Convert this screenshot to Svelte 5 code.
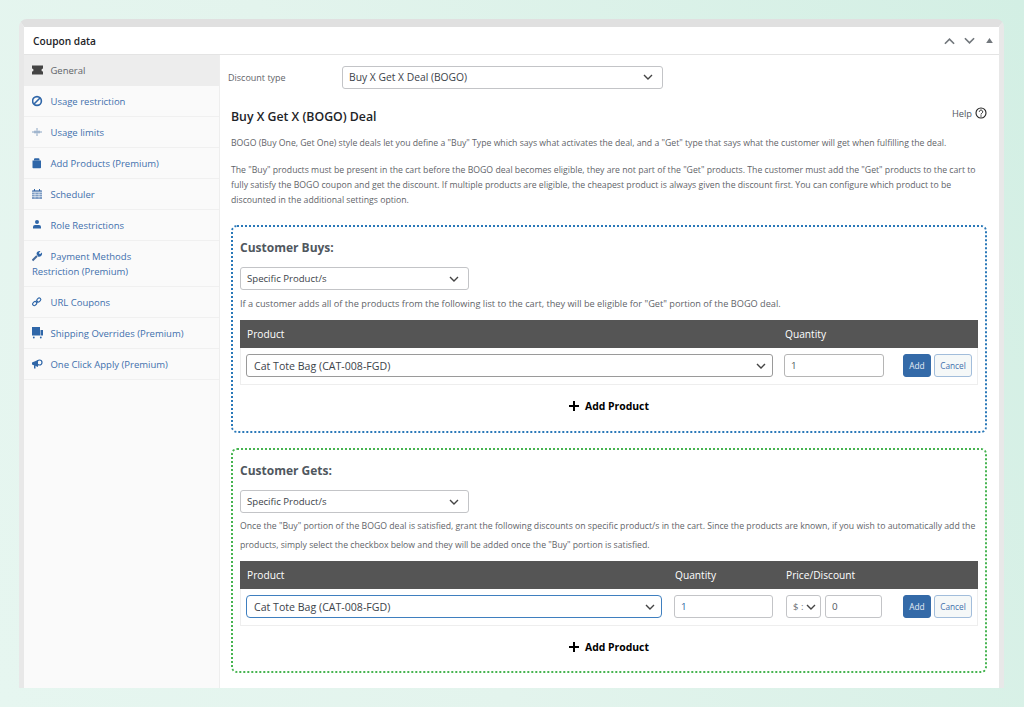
<script>
  const nav = [
    { label: 'General', icon: 'ticket', active: true },
    { label: 'Usage restriction', icon: 'ban' },
    { label: 'Usage limits', icon: 'limits' },
    { label: 'Add Products (Premium)', icon: 'bag' },
    { label: 'Scheduler', icon: 'calendar' },
    { label: 'Role Restrictions', icon: 'user' },
    { label: 'Payment Methods Restriction (Premium)', icon: 'wrench', tall: true },
    { label: 'URL Coupons', icon: 'link' },
    { label: 'Shipping Overrides (Premium)', icon: 'truck' },
    { label: 'One Click Apply (Premium)', icon: 'mega' }
  ];
</script>

{#snippet chevron()}
  <svg class="chev" viewBox="0 0 10 6" width="10" height="6"><path d="M1 1l4 4 4-4" fill="none" stroke="#444" stroke-width="1.4"/></svg>
{/snippet}

{#snippet select(text, cls)}
  <div class="select {cls}"><span>{text}</span>{@render chevron()}</div>
{/snippet}

{#snippet addProduct()}
  <div class="add-product"><svg viewBox="0 0 10 10" width="10" height="10"><path d="M5 0v10M0 5h10" stroke="#000" stroke-width="2"/></svg><b>Add Product</b></div>
{/snippet}

{#snippet buttons()}
  <div class="buttons"><span class="btn primary">Add</span><span class="btn secondary">Cancel</span></div>
{/snippet}

<div class="window">
  <header class="topbar">
    <h2>Coupon data</h2>
    <div class="controls">
      <svg viewBox="0 0 12 8" width="11" height="8"><path d="M1 7l5-5 5 5" fill="none" stroke="#72777c" stroke-width="1.8"/></svg>
      <svg viewBox="0 0 12 8" width="11" height="8"><path d="M1 1l5 5 5-5" fill="none" stroke="#72777c" stroke-width="1.8"/></svg>
      <svg class="tri" viewBox="0 0 8 6" width="7" height="5"><path d="M4 0l4 6H0z" fill="#72777c"/></svg>
    </div>
  </header>
  <div class="body">
    <aside class="side">
      <ul>
        {#each nav as item}
          <li class:active={item.active} class:tall={item.tall}>
            <svg class="ico" viewBox="0 0 12 12" width="12" height="12">
              {#if item.icon === 'ticket'}
                <path d="M0 1.500h11v3a1.500 1.500 0 0 0 0 3v3H0v-3a1.500 1.500 0 0 0 0-3z" fill="#444"/>
              {:else if item.icon === 'ban'}
                <circle cx="5" cy="6" r="4.400" fill="none" stroke="#2f66a8" stroke-width="1.600"/><path d="M2 9l6-6" stroke="#2f66a8" stroke-width="1.600"/>
              {:else if item.icon === 'limits'}
                <path d="M0 6h10M5 2v8M3 4.500v3M7 4.500v3" stroke="#6f8fb5" stroke-width=".8" fill="none"/>
              {:else if item.icon === 'bag'}
                <path d="M.5 3.500h8.500V10.500a.7.7 0 0 1-.7.7H1.200a.7.7 0 0 1-.7-.7z" fill="#2f66a8"/><path d="M2 3.500V2.300a1 1 0 0 1 1-1h3.500a1 1 0 0 1 1 1v1.200" fill="#2f66a8"/>
              {:else if item.icon === 'calendar'}
                <path d="M1 2h8a1 1 0 0 1 1 1v8H0V3a1 1 0 0 1 1-1z" fill="#7f9dc4"/><path d="M2.500 1v2M7.500 1v2" stroke="#2f66a8"/><path d="M0 4.500h10M0 6.500h10M0 8.500h10M3 4.500v6M7 4.500v6" stroke="#fff" stroke-width=".5"/>
              {:else if item.icon === 'user'}
                <circle cx="5" cy="3" r="2" fill="#2f66a8"/><path d="M1 9.500V8a2 2 0 0 1 2-2h4a2 2 0 0 1 2 2v1.500z" fill="#2f66a8"/>
              {:else if item.icon === 'wrench'}
                <path d="M.5 10.500l4.500-4.500" stroke="#44699a" stroke-width="2"/><path d="M4.500 4a3 3 0 0 1 4-2.800L6.800 3 8 4.200l1.800-1.700A3 3 0 0 1 6 6.500z" fill="#2f66a8"/>
              {:else if item.icon === 'link'}
                <path d="M4 7l2-2" stroke="#2f66a8" stroke-width="1.200"/><rect x=".5" y="6" width="4.500" height="3.200" rx="1.600" transform="rotate(-45 2.700 7.600)" fill="none" stroke="#2f66a8" stroke-width="1.100"/><rect x="4.500" y="2.400" width="4.500" height="3.200" rx="1.600" transform="rotate(-45 6.700 4)" fill="none" stroke="#2f66a8" stroke-width="1.100"/>
              {:else if item.icon === 'truck'}
                <path d="M0 0h8v8.500H0z" fill="#2f66a8"/><path d="M8.500 3H11v5.500H8.500z" fill="#2f66a8"/><circle cx="1.800" cy="10.500" r=".9" fill="#2f66a8"/><circle cx="8.800" cy="10.500" r=".9" fill="#2f66a8"/>
              {:else}
                <path d="M0 4.500L6 2v7L0 6.500z" fill="#2f66a8"/><circle cx="7.500" cy="4.500" r="2.500" fill="none" stroke="#2f66a8" stroke-width="1.200"/><path d="M2 7v3.500h1.500V7.500" fill="#2f66a8"/>
              {/if}
            </svg>
            {item.label}
          </li>
        {/each}
      </ul>
    </aside>
    <main class="content">
      <div class="type-row">
        <span class="type-label">Discount type</span>
        {@render select('Buy X Get X Deal (BOGO)', 'type-select')}
      </div>
      <div class="title-row">
        <h3>Buy X Get X (BOGO) Deal</h3>
        <span class="help">Help
          <svg viewBox="0 0 12 12" width="12" height="12"><circle cx="6" cy="6" r="5" fill="none" stroke="#222" stroke-width="1.100"/><path d="M4.300 4.700a1.700 1.700 0 1 1 2.600 1.500c-.6.4-.9.700-.9 1.300" fill="none" stroke="#222"/><circle cx="6" cy="9" r=".7" fill="#222"/></svg>
        </span>
      </div>
      <p class="intro">BOGO (Buy One, Get One) style deals let you define a "Buy" Type which says what activates the deal, and a "Get" type that says what the customer will get when fulfilling the deal.</p>
      <p class="intro second">The "Buy" products must be present in the cart before the BOGO deal becomes eligible, they are not part of the "Get" products. The customer must add the "Get" products to the cart to fully satisfy the BOGO coupon and get the discount. If multiple products are eligible, the cheapest product is always given the discount first. You can configure which product to be discounted in the additional settings option.</p>

      <section class="box buys">
        <h4>Customer Buys:</h4>
        {@render select('Specific Product/s', 'scope')}
        <p class="note">If a customer adds all of the products from the following list to the cart, they will be eligible for "Get" portion of the BOGO deal.</p>
        <div class="table">
          <div class="thead buys-grid"><span>Product</span><span>Quantity</span></div>
          <div class="row buys-grid">
            {@render select('Cat Tote Bag (CAT-008-FGD)', 'product')}
            <div class="input dark">1</div>
            {@render buttons()}
          </div>
        </div>
        {@render addProduct()}
      </section>

      <section class="box gets">
        <h4>Customer Gets:</h4>
        {@render select('Specific Product/s', 'scope')}
        <p class="note two">Once the "Buy" portion of the BOGO deal is satisfied, grant the following discounts on specific product/s in the cart. Since the products are known, if you wish to automatically add the products, simply select the checkbox below and they will be added once the "Buy" portion is satisfied.</p>
        <div class="table">
          <div class="thead gets-grid"><span>Product</span><span>Quantity</span><span>Price/Discount</span></div>
          <div class="row gets-grid">
            {@render select('Cat Tote Bag (CAT-008-FGD)', 'product focus')}
            <div class="input">1</div>
            <div class="price">
              {@render select('$ :', 'currency')}
              <div class="input amount">0</div>
            </div>
            {@render buttons()}
          </div>
        </div>
        {@render addProduct()}
      </section>
    </main>
  </div>
</div>

<style>
  :global(body) {
    margin: 0;
    height: 707px;
    overflow: hidden;
    background: linear-gradient(70deg, #e6f6f0 0%, #e3f4ed 40%, #d3efe4 100%);
    font-family: "Open Sans", "Noto Sans", sans-serif;
    color: #50575e;
  }
  * { box-sizing: border-box; }
  .window {
    width: 985px;
    height: 669px;
    margin: 19px 0 0 19px;
    border: 5px solid #e8e8e8;
    border-top: 8px solid #e0e0e0;
    border-bottom: 0;
    border-radius: 8px 8px 0 0;
    background: #fff;
    display: flex;
    flex-direction: column;
  }
  .topbar {
    height: 28px;
    flex: none;
    display: flex;
    align-items: center;
    justify-content: space-between;
    padding: 0 6px 0 9px;
    border-bottom: 1px solid #e4e4e4;
  }
  h2 { margin: 0; font-size: 10.200px; font-weight: 600; color: #1d2327; }
  .controls { display: flex; align-items: center; gap: 9px; }
  .tri { margin-left: 2px; }
  .body { flex: 1; display: flex; min-height: 0; }
  .side { width: 196px; flex: none; background: #fafafa; border-right: 1px solid #eee; }
  ul { list-style: none; margin: 0; padding: 0; }
  li {
    height: 31px;
    padding: 7.500px 8px 0;
    font-size: 9.500px;
    line-height: 15px;
    color: #3f70ad;
    border-bottom: 1px solid #f0f0f0;
  }
  li.tall { height: 46px; padding-right: 60px; }
  li.active { background: #ededed; color: #5f6469; border-bottom-color: #ededed; }
  .ico { vertical-align: -2px; margin-right: 4px; }
  .content { flex: 1; padding: 10px 12px 0 11px; min-width: 0; }
  .type-row { display: flex; align-items: center; height: 24px; margin-left: -3px; }
  .type-label { width: 114px; font-size: 9px; color: #5f6469; }
  .select {
    display: flex;
    align-items: center;
    justify-content: space-between;
    height: 23px;
    padding: 0 9px 0 6px;
    border: 1px solid #c3c4c7;
    border-radius: 3px;
    background: #fff;
    font-size: 9.600px;
    color: #3c434a;
  }
  .type-select { width: 321px; font-size: 10.300px; }
  .title-row { display: flex; justify-content: space-between; align-items: center; margin-top: 17px; height: 20px; }
  h3 { margin: 0; font-size: 12.300px; font-weight: 600; color: #1d2327; }
  .help { display: flex; align-items: center; gap: 3px; font-size: 9.300px; color: #50575e; margin-bottom: 6px; }
  .intro { margin: 10px 0 0; font-size: 8.700px; line-height: 15px; color: #5f6469; }
  .intro.second { margin-top: 12px; }
  .box { border: 2px dotted #2a78b8; border-radius: 6px; padding: 12px 7px 0; margin-top: 17px; height: 208px; }
  .gets { border-color: #46b450; margin-top: 15px; height: 225px; }
  h4 { margin: 0 0 11px; font-size: 12px; line-height: 17px; font-weight: 700; color: #50575e; }
  .scope { width: 229px; }
  .note { margin: 7px 0 10px; font-size: 9.200px; line-height: 13px; color: #5f6469; }
  .note.two { font-size: 8.700px; line-height: 19px; margin: 4px 0 6px; }
  .table { border: 1px solid #eee; border-top: 0; width: 738px; }
  .thead { height: 28px; background: #555; color: #fff; font-size: 10.200px; align-items: center; margin: 0 0 0 -1px; width: 738px; }
  .thead.buys-grid, .thead.gets-grid { padding-left: 7px; }
  .buys-grid { display: grid; grid-template-columns: 527px 100px 1fr; column-gap: 11px; padding: 0 5px 0 5px; }
  .gets-grid { display: grid; grid-template-columns: 416px 99px 1fr 70px; column-gap: 12px; padding: 0 5px 0 5px; }
  .row { height: 36px; align-items: start; padding-top: 6px; }
  .input {
    height: 23px;
    border: 1px solid #c3c4c7;
    border-radius: 3px;
    padding: 0 6px;
    font-size: 9.800px;
    line-height: 21px;
    color: #2c5f9e;
  }
  .input.dark { color: #50575e; border-color: #b5b5b5; }
  .select.product { border-color: #9a9a9a; padding: 0 6px 0 7px; font-size: 10.600px; }
  .select.focus { border: 1.500px solid #3f7fbf; border-radius: 4px; }
  .price { display: flex; gap: 4px; margin-left: 1px; }
  .select.currency { width: 35px; padding: 0 4px 0 6px; font-size: 9.500px; color: #6b7076; overflow: hidden; }
  .currency span { white-space: nowrap; }
  .amount { width: 57px; color: #50575e; }
  .buttons { display: flex; gap: 3px; justify-content: flex-end; }
  .btn { height: 23px; border-radius: 3px; font-size: 8.300px; line-height: 21px; text-align: center; border: 1px solid #346aa8; }
  .primary { width: 28px; background: #346aa8; color: #e8eef6; }
  .secondary { width: 38px; background: #f5f8f8; color: #3f70ad; border-color: #a2bddb; }
  .add-product { display: flex; align-items: center; justify-content: center; gap: 6px; margin-top: 14px; font-size: 10.400px; color: #000; }
</style>
